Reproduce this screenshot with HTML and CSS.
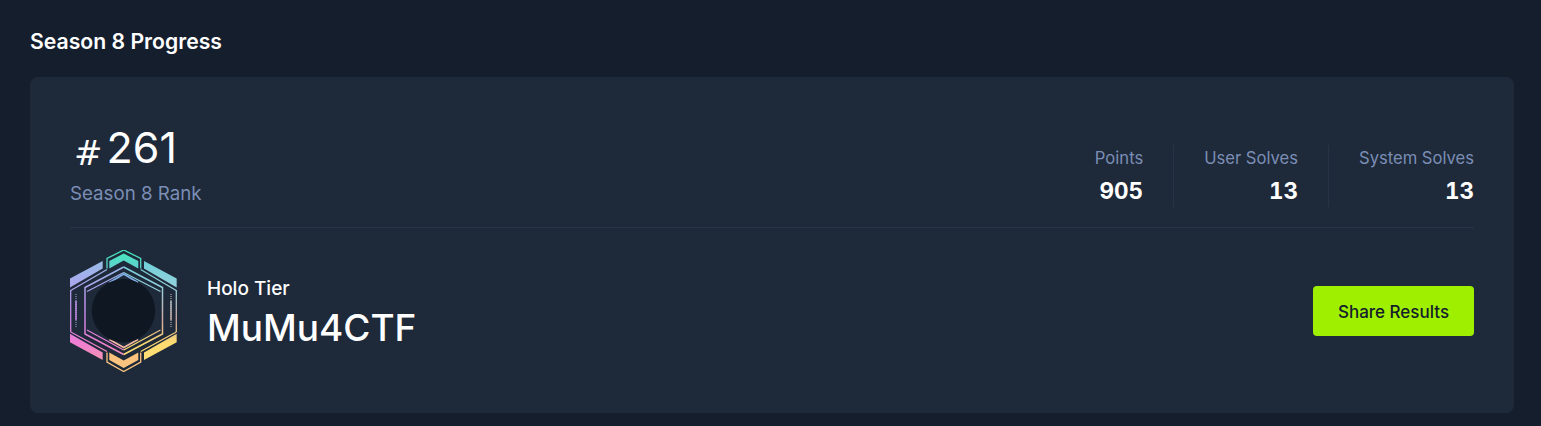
FILE: index.html
```html
<!DOCTYPE html>
<html lang="en">
<head>
  <meta charset="UTF-8">
  <meta name="viewport" content="width=device-width, initial-scale=1.0">
  <title>Season 8 Progress</title>
  <link rel="stylesheet" href="styles.css">
</head>
<body>
  <h2 class="page-title">Season 8 Progress</h2>
  <section class="card">
    <div class="top-row">
      <div class="rank">
        <div class="rank-value"><span class="rank-hash">#</span><span class="rank-number">261</span></div>
        <div class="rank-label">Season 8 Rank</div>
      </div>
      <div class="stats">
        <div class="stat">
          <div class="stat-label">Points</div>
          <div class="stat-value">905</div>
        </div>
        <div class="stat">
          <div class="stat-label">User Solves</div>
          <div class="stat-value">13</div>
        </div>
        <div class="stat">
          <div class="stat-label">System Solves</div>
          <div class="stat-value">13</div>
        </div>
      </div>
    </div>
    <div class="bottom-row">
      <div class="player">
        <!-- holo tier badge, coordinates are page pixels -->
        <svg class="badge" width="108" height="122" viewBox="70 250 108 122" fill="none" xmlns="http://www.w3.org/2000/svg">
          <defs>
            <linearGradient id="holoLeft" gradientUnits="userSpaceOnUse" x1="0" y1="255" x2="0" y2="365">
              <stop offset="0" stop-color="#90c4e4"/>
              <stop offset="0.25" stop-color="#a9a8ee"/>
              <stop offset="0.55" stop-color="#c184e6"/>
              <stop offset="0.8" stop-color="#f07ed2"/>
              <stop offset="1" stop-color="#f59aa8"/>
            </linearGradient>
            <linearGradient id="holoRight" gradientUnits="userSpaceOnUse" x1="0" y1="255" x2="0" y2="365">
              <stop offset="0" stop-color="#66d2d8"/>
              <stop offset="0.3" stop-color="#96d0dc"/>
              <stop offset="0.6" stop-color="#d0a8a0"/>
              <stop offset="0.8" stop-color="#fddc70"/>
              <stop offset="1" stop-color="#fde078"/>
            </linearGradient>
            <linearGradient id="holoMid" gradientUnits="userSpaceOnUse" x1="0" y1="250" x2="0" y2="372">
              <stop offset="0" stop-color="#40eab8"/>
              <stop offset="0.15" stop-color="#62d0d0"/>
              <stop offset="0.3" stop-color="#82aee8"/>
              <stop offset="0.72" stop-color="#e8a0b0"/>
              <stop offset="0.85" stop-color="#fcc07c"/>
              <stop offset="1" stop-color="#fcc880"/>
            </linearGradient>
          </defs>
          <!-- corner bands -->
          <polygon points="70,278.5 102.7,261 102.7,268.5 70,287.5" fill="url(#holoLeft)"/>
          <polygon points="144,261 176.7,278.5 176.7,287.5 144,268.5" fill="url(#holoRight)"/>
          <polygon points="70,333.7 102.7,352.5 102.7,360 70,342.3" fill="url(#holoLeft)"/>
          <polygon points="144,352.5 176.7,333.7 176.7,342.3 144,360" fill="url(#holoRight)"/>
          <!-- top and bottom chevrons -->
          <polygon points="109.3,261 123.7,253.5 138.3,261 138.3,268.5 123.7,260.5 109.3,268.5" fill="url(#holoMid)"/>
          <polygon points="109.3,352.5 123.7,360.5 138.3,352.5 138.3,360 123.7,368 109.3,360" fill="url(#holoMid)"/>
          <path d="M107 268.5V258.5L123.7 250L140.7 258.5V268.5" stroke="url(#holoMid)" stroke-width="1.3"/>
          <path d="M107 352.5V362L123.7 371.5L140.7 362V352.5" stroke="url(#holoMid)" stroke-width="1.3"/>
          <!-- hex outlines -->
          <path d="M70.7 290.5L107 269.5" stroke="url(#holoLeft)" stroke-width="1.3"/>
          <path d="M140.7 269.5L176.3 290.5" stroke="url(#holoRight)" stroke-width="1.3"/>
          <path d="M70.7 332L107 351.5" stroke="url(#holoLeft)" stroke-width="1.3"/>
          <path d="M140.7 351.5L176.3 332" stroke="url(#holoRight)" stroke-width="1.3"/>
          <path d="M70.7 290V332" stroke="url(#holoLeft)" stroke-width="1.3"/>
          <path d="M176.3 290V332" stroke="url(#holoRight)" stroke-width="1.3"/>
          <path d="M123.7 267L85 287.5V334L123.7 354.5" stroke="url(#holoLeft)" stroke-width="1.5"/>
          <path d="M123.7 267L162.5 287.5V334L123.7 354.5" stroke="url(#holoRight)" stroke-width="1.5"/>
          <path d="M123.7 272.5L87 291.5M87 330L123.7 350" stroke="url(#holoLeft)" stroke-width="1.2"/>
          <path d="M123.7 272.5L160.5 291.5M160.5 330L123.7 350" stroke="url(#holoRight)" stroke-width="1.2"/>
          <path d="M109.5 282.5L123.7 274L138 282.5" stroke="#82aee8" stroke-width="1.8"/>
          <path d="M109.5 339.5L123.7 347.5L138 339.5" stroke="#f0b8a0" stroke-width="1.8"/>
          <path d="M76 294V327" stroke="#8d8db0" stroke-width="1.3" stroke-dasharray="1 1"/>
          <path d="M76 301V320" stroke="url(#holoLeft)" stroke-width="1.5"/>
          <path d="M171 294V327" stroke="#a09a9a" stroke-width="1.3" stroke-dasharray="1 1"/>
          <path d="M171 301V320" stroke="url(#holoRight)" stroke-width="1.5"/>
          <circle cx="123.5" cy="310.7" r="31.7" fill="#0f1722"/>
        </svg>
        <div class="player-text">
          <div class="tier">Holo Tier</div>
          <div class="player-name">MuMu4CTF</div>
        </div>
      </div>
      <button class="share-btn">Share Results</button>
    </div>
  </section>
</body>
</html>
```

FILE: styles.css
```css
body {
  margin: 0;
  padding: 28px 27px 13px 30px;
  background: #151e2d;
  font-family: Inter, 'Liberation Sans', sans-serif;
  color: #fff;
  overflow: hidden;
}
.page-title {
  margin: 0 0 23px;
  font-size: 21.2px;
  line-height: 26px;
  font-weight: 600;
}
.card {
  height: 336px;
  box-sizing: border-box;
  padding: 46px 40px 0;
  background: #1e2939;
  border-radius: 8px;
}
.top-row {
  display: flex;
  justify-content: space-between;
  align-items: flex-start;
  height: 104px;
  border-bottom: 1px solid #283446;
}
.rank-value {
  display: flex;
  align-items: baseline;
  padding-left: 4px;
  gap: 4px;
  line-height: 48px;
}
.rank-hash {
  font-family: 'DejaVu Sans', sans-serif;
  font-size: 34px;
  transform: translateY(2px);
}
.rank-number {
  font-size: 43px;
}
.rank-label {
  color: #7b8eb5;
  font-size: 18.7px;
  line-height: 24px;
  margin-top: 7px;
}
.stats {
  display: flex;
  margin-top: 22px;
}
.stat {
  height: 62px;
  padding: 0 30px;
  border-left: 1px solid #283446;
  text-align: right;
}
.stat:first-child {
  border-left: none;
}
.stat:last-child {
  padding-right: 0;
}
.stat-label {
  color: #7b8eb5;
  font-size: 16.6px;
  line-height: 26px;
}
.stat-value {
  margin-top: 5px;
  font-size: 22.5px;
  font-weight: 700;
  line-height: 30px;
  font-variant-numeric: tabular-nums;
}
.bottom-row {
  display: flex;
  justify-content: space-between;
  align-items: center;
  height: 166px;
}
.player {
  display: flex;
  align-items: center;
  gap: 29px;
}
.badge {
  display: block;
}
.player-text {
  padding-top: 6px;
}
.tier {
  font-size: 19px;
  line-height: 24px;
  font-weight: 500;
}
.player-name {
  margin-top: 4px;
  font-size: 37px;
  line-height: 46px;
  font-weight: 550;
}
.share-btn {
  width: 161px;
  height: 50px;
  padding: 2px 0 0;
  border: none;
  border-radius: 4px;
  background: #9fef00;
  color: #141d2b;
  font-family: Inter, 'Liberation Sans', sans-serif;
  font-size: 17px;
  font-weight: 500;
}
```
